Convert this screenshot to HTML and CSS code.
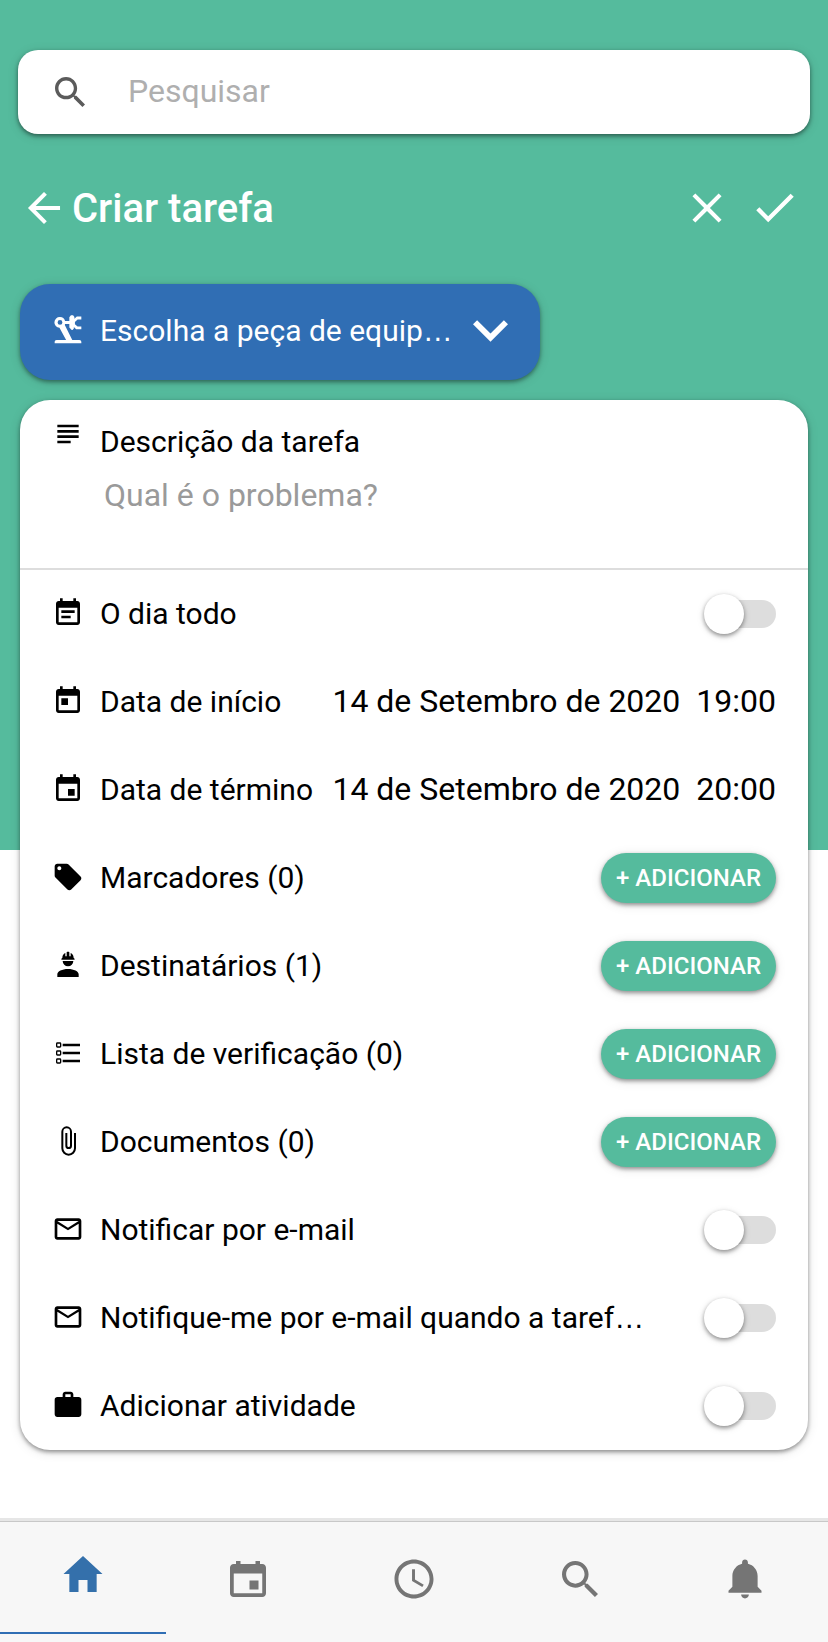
FILE: index.html
```html
<!DOCTYPE html>
<html lang="pt">
<head>
  <meta charset="UTF-8" />
  <meta name="viewport" content="width=device-width, initial-scale=1" />
  <title>Criar tarefa</title>
  <link rel="stylesheet" href="styles.css">
</head>
<body>
  <main class="page">
    <form class="search" role="search">
      <svg class="search-icon" viewBox="0 0 512 512" aria-hidden="true"><path d="M337.509 305.372h-17.501l-6.571-5.486c20.791-25.232 33.922-57.054 33.922-93.257C347.358 127.632 283.896 64 205.135 64 127.452 64 64 127.632 64 206.629s63.452 142.628 142.225 142.628c35.011 0 67.831-13.167 92.991-34.008l6.561 5.487v17.551L415.18 448 448 415.086 337.509 305.372zm-131.284 0c-54.702 0-98.463-43.887-98.463-98.743 0-54.858 43.761-98.742 98.463-98.742 54.7 0 98.462 43.884 98.462 98.742 0 54.856-43.762 98.743-98.462 98.743z"/></svg>
      <input class="search-input" type="search" placeholder="Pesquisar" aria-label="Pesquisar">
    </form>

    <header class="header">
      <button class="icon-button" type="button" aria-label="Voltar">
        <svg class="back-icon" viewBox="0 0 512 512"><path d="M427 234.625H167.296l119.702-119.702L256 85 85 256l171 171 29.922-29.924-118.626-119.701H427v-42.75z"/></svg>
      </button>
      <h1 class="title">Criar tarefa</h1>
      <button class="icon-button" type="button" aria-label="Cancelar">
        <svg class="action-icon" viewBox="0 0 512 512"><path d="M405 136.798L375.202 107 256 226.202 136.798 107 107 136.798 226.202 256 107 375.202 136.798 405 256 285.798 375.202 405 405 375.202 285.798 256z"/></svg>
      </button>
      <button class="icon-button" type="button" aria-label="Salvar">
        <svg class="action-icon" viewBox="0 0 512 512"><path d="M186.301 339.893L96 249.461l-32 30.507L186.301 402 448 140.506 416 110z"/></svg>
      </button>
    </header>

    <button class="equipment" type="button">
      <svg class="icon" viewBox="0 0 24 24" aria-hidden="true">
        <path fill-rule="evenodd" d="M6 2.300a4 4 0 0 1 3.800 3H13V2.400L14.200 1h1.600l1 1.200v1.400L18.600 1.900H22V4.100h-2.800l-2 1.900v1.600l2 1.700H22v2.100h-3.900L16.400 9.800v1l-1 1.200h-.6L13 10.200V7.500H9.800l-.2.700 5.600 11.300h5.300c.9 0 1.500.700 1.500 1.500v1H2v-1c0-.8.600-1.500 1.500-1.500h7.100L5.600 10.300a4 4 0 0 1 .4-8zm0 2.200a1.800 1.800 0 1 0 0 3.600 1.800 1.800 0 0 0 0-3.600z"/>
      </svg>
      <span class="label">Escolha a peça de equip<span class="dots">…</span></span>
      <svg class="chevron" viewBox="6 8.590 12 7.410" aria-hidden="true"><path d="M7.410 8.590 12 13.170l4.590-4.580L18 10l-6 6-6-6z"/></svg>
    </button>

    <section class="card">
      <div class="description">
        <svg class="icon" viewBox="0 0 24 24" aria-hidden="true"><path d="M14 17H4v2h10v-2zm6-8H4v2h16V9zM4 15h16v-2H4v2zM4 5v2h16V5H4z"/></svg>
        <div class="description-body">
          <label class="description-label" for="description">Descrição da tarefa</label>
          <textarea class="description-input" id="description" rows="1" placeholder="Qual é o problema?"></textarea>
        </div>
      </div>

      <div class="row">
        <svg class="icon" viewBox="0 0 24 24" aria-hidden="true"><path d="M17 10H7v2h10v-2zm-3 4H7v2h7v-2zm5-11h-1V1h-2v2H8V1H6v2H5c-1.110 0-2 .9-2 2v14c0 1.100.890 2 2 2h14c1.100 0 2-.9 2-2V5c0-1.100-.9-2-2-2zm0 16H5V8h14v11z"/></svg>
        <label class="label" for="all-day">O dia todo</label>
        <input class="toggle" type="checkbox" role="switch" id="all-day">
      </div>

      <div class="row">
        <svg class="icon" viewBox="0 0 24 24" aria-hidden="true"><path d="M19 3h-1V1h-2v2H8V1H6v2H5c-1.110 0-2 .9-2 2v14c0 1.100.890 2 2 2h14c1.100 0 2-.9 2-2V5c0-1.100-.9-2-2-2zm0 16H5V8h14v11zM7 10h5v5H7z"/></svg>
        <span class="label">Data de início</span>
        <button class="date" type="button">14 de Setembro de 2020</button>
        <button class="date" type="button">19:00</button>
      </div>

      <div class="row">
        <svg class="icon" viewBox="0 0 24 24" aria-hidden="true"><path d="M19 3h-1V1h-2v2H8V1H6v2H5c-1.110 0-2 .9-2 2v14c0 1.100.890 2 2 2h14c1.100 0 2-.9 2-2V5c0-1.100-.9-2-2-2zm0 16H5V8h14v11zM12 12h5v5h-5z"/></svg>
        <span class="label">Data de término</span>
        <button class="date" type="button">14 de Setembro de 2020</button>
        <button class="date" type="button">20:00</button>
      </div>

      <div class="row">
        <svg class="icon" viewBox="0 0 24 24" aria-hidden="true"><path d="M21.410 11.580l-9-9C12.050 2.220 11.550 2 11 2H4c-1.100 0-2 .9-2 2v7c0 .55.220 1.050.590 1.420l9 9c.36.360.860.580 1.410.580.550 0 1.050-.220 1.410-.590l7-7c.370-.360.590-.860.590-1.410 0-.550-.230-1.060-.590-1.420zM5.500 7C4.670 7 4 6.330 4 5.500S4.670 4 5.500 4 7 4.670 7 5.500 6.330 7 5.500 7z"/></svg>
        <span class="label">Marcadores (0)</span>
        <button class="add" type="button">+ ADICIONAR</button>
      </div>

      <div class="row">
        <svg class="icon" viewBox="0 0 24 24" aria-hidden="true"><path d="M12 15c-4.420 0-8 1.790-8 4v2h16v-2c0-2.210-3.580-4-8-4M8 9a4 4 0 0 0 8 0M11.500 2c-.3 0-.5.210-.5.500v3h-1V3S7.750 3.860 7.750 6.750C7.750 6.750 7 6.890 7 8h10c-.050-1.110-.750-1.250-.750-1.250C16.250 3.860 14 3 14 3v2.500h-1v-3c0-.290-.190-.5-.5-.5h-1z"/></svg>
        <span class="label">Destinatários (1)</span>
        <button class="add" type="button">+ ADICIONAR</button>
      </div>

      <div class="row">
        <svg class="icon" viewBox="0 0 24 24" aria-hidden="true"><path fill-rule="evenodd" d="M21 19v-2H8v2h13m0-6v-2H8v2h13M8 7h13V5H8v2M4 4h2a1 1 0 0 1 1 1v2a1 1 0 0 1-1 1H4a1 1 0 0 1-1-1V5a1 1 0 0 1 1-1m0 1v2h2V5H4m0 5h2a1 1 0 0 1 1 1v2a1 1 0 0 1-1 1H4a1 1 0 0 1-1-1v-2a1 1 0 0 1 1-1m0 1v2h2v-2H4m0 5h2a1 1 0 0 1 1 1v2a1 1 0 0 1-1 1H4a1 1 0 0 1-1-1v-2a1 1 0 0 1 1-1m0 1v2h2v-2H4z"/></svg>
        <span class="label">Lista de verificação (0)</span>
        <button class="add" type="button">+ ADICIONAR</button>
      </div>

      <div class="row">
        <svg class="icon" viewBox="0 0 24 24" aria-hidden="true"><path d="M16.500 6v11.500a4 4 0 0 1-8 0V5a2.500 2.500 0 0 1 5 0v10.500a1 1 0 0 1-2 0V6H10v9.500a2.500 2.500 0 0 0 5 0V5a4 4 0 0 0-8 0v12.500a5.500 5.500 0 0 0 11 0V6h-1.500z"/></svg>
        <span class="label">Documentos (0)</span>
        <button class="add" type="button">+ ADICIONAR</button>
      </div>

      <div class="row">
        <svg class="icon" viewBox="0 0 24 24" aria-hidden="true"><path d="M22 6c0-1.100-.9-2-2-2H4c-1.100 0-2 .9-2 2v12c0 1.100.9 2 2 2h16c1.100 0 2-.9 2-2V6zm-2 0-8 5-8-5h16zm0 12H4V8l8 5 8-5v10z"/></svg>
        <label class="label" for="notify">Notificar por e-mail</label>
        <input class="toggle" type="checkbox" role="switch" id="notify">
      </div>

      <div class="row">
        <svg class="icon" viewBox="0 0 24 24" aria-hidden="true"><path d="M22 6c0-1.100-.9-2-2-2H4c-1.100 0-2 .9-2 2v12c0 1.100.9 2 2 2h16c1.100 0 2-.9 2-2V6zm-2 0-8 5-8-5h16zm0 12H4V8l8 5 8-5v10z"/></svg>
        <label class="label" for="notify-me">Notifique-me por e-mail quando a taref<span class="dots">…</span></label>
        <input class="toggle" type="checkbox" role="switch" id="notify-me">
      </div>

      <div class="row">
        <svg class="icon" viewBox="0 0 24 24" aria-hidden="true"><path d="M20 6h-4V4c0-1.110-.890-2-2-2h-4c-1.110 0-2 .890-2 2v2H4c-1.110 0-2 .890-2 2v11c0 1.110.890 2 2 2h16c1.110 0 2-.890 2-2V8c0-1.110-.890-2-2-2zm-6 0h-4V4h4v2z"/></svg>
        <label class="label" for="activity">Adicionar atividade</label>
        <input class="toggle" type="checkbox" role="switch" id="activity">
      </div>
    </section>
  </main>

  <nav class="tabs">
    <a class="tab active" href="#home" aria-label="Início">
      <svg viewBox="0 0 512 512"><path d="M208 448V320h96v128h97.600V256H464L256 64 48 256h62.400v192z"/></svg>
    </a>
    <a class="tab" href="#calendar" aria-label="Calendário">
      <svg viewBox="0 0 512 512"><path d="M368 272h-96v96h96v-96zm-32-208v32H176V64h-48v32h-24c-22 0-40 18-40 40v272c0 22 18 40 40 40h304c22 0 40-18 40-40V136c0-22-18-40-40-40h-24V64h-48zm72 344H104V196h304v212z"/></svg>
    </a>
    <a class="tab" href="#history" aria-label="Histórico">
      <svg viewBox="0 0 512 512"><path d="M255.800 48C141 48 48 141.200 48 256s93 208 207.800 208c115 0 208.200-93.200 208.200-208S370.800 48 255.800 48zm.2 374.400c-91.900 0-166.400-74.500-166.400-166.400S164.100 89.600 256 89.600 422.400 164.100 422.400 256 347.900 422.400 256 422.400z"/><path d="M266.400 152h-31.200v124.800l109.200 65.500 15.600-25.600-93.600-55.500V152z"/></svg>
    </a>
    <a class="tab" href="#search" aria-label="Pesquisar">
      <svg viewBox="0 0 512 512"><path d="M337.509 305.372h-17.501l-6.571-5.486c20.791-25.232 33.922-57.054 33.922-93.257C347.358 127.632 283.896 64 205.135 64 127.452 64 64 127.632 64 206.629s63.452 142.628 142.225 142.628c35.011 0 67.831-13.167 92.991-34.008l6.561 5.487v17.551L415.180 448 448 415.086 337.509 305.372zm-131.284 0c-54.702 0-98.463-43.887-98.463-98.743 0-54.858 43.761-98.742 98.463-98.742 54.700 0 98.462 43.884 98.462 98.742 0 54.856-43.762 98.743-98.462 98.743z"/></svg>
    </a>
    <a class="tab" href="#notifications" aria-label="Notificações">
      <svg viewBox="0 0 512 512"><path d="M256 464c22.779 0 41.411-18.719 41.411-41.600h-82.823c0 22.881 18.633 41.600 41.412 41.600zm134.589-124.800V224.800c0-63.440-44.516-117.518-103.530-131.041V79.200c0-17.682-13.457-31.200-31.059-31.200s-31.059 13.518-31.059 31.200v14.559c-59.015 13.523-103.530 67.601-103.530 131.041v114.400L80 380.800v20.800h352v-20.800l-41.411-41.600z"/></svg>
    </a>
  </nav>
</body>
</html>
```

FILE: styles.css
```css
* {
  box-sizing: border-box;
}
body {
  margin: 0;
  min-height: 100vh;
  display: flex;
  flex-direction: column;
  font-family: Roboto, sans-serif;
  font-size: 30px;
  line-height: 36px;
  color: #000;
  background: #fff;
}
button, input, textarea {
  font: inherit;
  color: inherit;
  margin: 0;
  padding: 0;
  border: none;
  background: none;
}
button {
  cursor: pointer;
}
svg {
  display: block;
  flex: none;
  fill: currentColor;
}
.page {
  flex: 1;
  padding: 50px 0 68px;
  background: linear-gradient(#55bb9d, #55bb9d) no-repeat;
  background-size: 100% 850px;
}

/* search */
.search {
  display: flex;
  align-items: center;
  gap: 38px;
  height: 84px;
  margin: 0 18px;
  padding: 0 32px;
  border-radius: 20px;
  background: #fff;
  box-shadow: 0 2px 4px rgba(0,0,0,0.45), 0 2px 12px rgba(0,0,0,0.12);
}
.search-icon {
  width: 40px;
  height: 40px;
  color: #5b5b5b;
}
.search-input {
  flex: 1;
  min-width: 0;
  padding-bottom: 2px;
  font-size: 32px;
  outline: none;
  appearance: none;
}
.search-input::placeholder {
  color: #afafaf;
}

/* title bar */
.header {
  display: flex;
  align-items: center;
  gap: 18px;
  height: 52px;
  margin-top: 48px;
  padding: 0 28px 0 20px;
  color: #fff;
}
.title {
  flex: 1;
  margin: 0 0 0 -14px;
  padding-top: 2px;
  font-size: 40px;
  font-weight: 500;
}
.back-icon {
  width: 48px;
  height: 48px;
}
.action-icon {
  width: 50px;
  height: 50px;
}

.icon {
  width: 32px;
  height: 32px;
  margin-bottom: 2px;
}
.label {
  flex: 1;
  min-width: 0;
  overflow: hidden;
  white-space: nowrap;
  text-overflow: ellipsis;
  text-align: left;
}
.dots {
  font-family: "Liberation Sans", sans-serif;
}

.equipment {
  display: flex;
  align-items: center;
  gap: 16px;
  width: 520px;
  max-width: calc(100% - 40px);
  height: 96px;
  margin: 50px 20px 0;
  padding: 0 32px 2px;
  border-radius: 30px;
  color: #fff;
  background: #306eb4;
  box-shadow: 0 2px 4px rgba(0,0,0,0.4), 0 2px 12px rgba(0,0,0,0.12);
}
.chevron {
  width: 35px;
  height: 22px;
}

/* task form */
.card {
  margin: 20px 20px 0;
  border-radius: 30px;
  background: #fff;
  box-shadow: 0 2px 4px rgba(0,0,0,0.4), 0 2px 12px rgba(0,0,0,0.12);
}
.description {
  display: flex;
  gap: 16px;
  padding: 18px 32px 47px;
  border-bottom: 2px solid #ddd;
}
.description-body {
  flex: 1;
  display: flex;
  flex-direction: column;
  gap: 13px;
  padding-top: 6px;
}
.description-input {
  height: 48px;
  padding: 4px;
  font-size: 32px;
  resize: none;
  outline: none;
  overflow: hidden;
}
.description-input::placeholder {
  color: #9a9a9a;
}
.row {
  display: flex;
  align-items: center;
  gap: 16px;
  height: 88px;
  padding: 0 32px;
}
.date {
  padding-bottom: 2px;
  font-size: 32px;
  white-space: nowrap;
}
.add {
  height: 50px;
  padding: 0 15px;
  border-radius: 25px;
  font-size: 24px;
  font-weight: 500;
  white-space: nowrap;
  color: #fff;
  background: #55bb9d;
  box-shadow: 0 2px 4px rgba(0,0,0,0.4), 0 2px 12px rgba(0,0,0,0.1);
}
.toggle {
  appearance: none;
  flex: none;
  display: flex;
  align-items: center;
  width: 68px;
  height: 28px;
  margin-left: 36px;
  border-radius: 14px;
  background: #ddd;
  cursor: pointer;
}
.toggle::before {
  content: "";
  flex: none;
  width: 40px;
  height: 40px;
  margin-left: -4px;
  border-radius: 50%;
  background: #fff;
  box-shadow: 0 2px 4px rgba(0,0,0,0.4), 0 2px 8px rgba(0,0,0,0.1);
}
.toggle:checked {
  background: #55bb9d;
}
.toggle:checked::before {
  margin-left: 32px;
}

/* bottom tabs */
.tabs {
  display: flex;
  height: 124px;
  padding-bottom: 8px;
  border-top: 3px solid #e6e6e6;
  box-shadow: inset 0 1px #c8c8c8;
  background: #f7f7f7;
}
.tab {
  flex: 1;
  display: flex;
  justify-content: center;
  padding-top: 34px;
  color: #757575;
}
.tab svg {
  width: 48px;
  height: 48px;
}
.tab.active {
  padding-top: 29px;
  color: #3470ab;
  border-bottom: 2px solid #306eb4;
}
```
